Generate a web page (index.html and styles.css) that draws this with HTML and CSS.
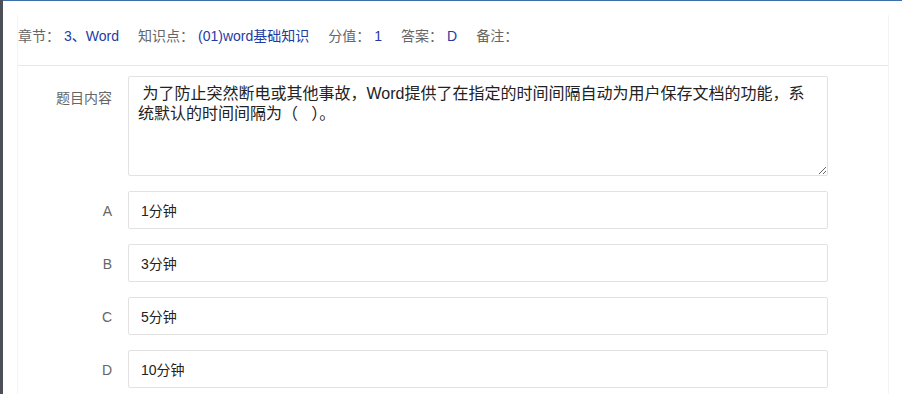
FILE: index.html
```html
<!DOCTYPE html>
<html lang="zh-CN">
<head>
    <meta charset="UTF-8">
    <meta name="viewport" content="width=device-width, initial-scale=1.0">
    <title>题目详情</title>
    <link rel="stylesheet" href="styles.css">
</head>
<body>

    <div class="side-strip"></div>

    <div class="main">
        <div class="card">
            <div class="info-bar">
                <span class="info-item"><span class="info-label">章节：</span><span class="info-value">3、Word</span></span>
                <span class="info-item"><span class="info-label">知识点：</span><span class="info-value">(01)word基础知识</span></span>
                <span class="info-item"><span class="info-label">分值：</span><span class="info-value">1</span></span>
                <span class="info-item"><span class="info-label">答案：</span><span class="info-value">D</span></span>
                <span class="info-item"><span class="info-label">备注：</span><span class="info-value"></span></span>
            </div>

            <form class="question-form">
                <div class="form-row">
                    <label class="form-label content-label">题目内容</label>
                    <textarea class="question-text"> 为了防止突然断电或其他事故，Word提供了在指定的时间间隔自动为用户保存文档的功能，系统默认的时间间隔为（   ）。</textarea>
                </div>
                <div class="form-row">
                    <label class="form-label">A</label>
                    <input type="text" class="option-input" value="1分钟">
                </div>
                <div class="form-row">
                    <label class="form-label">B</label>
                    <input type="text" class="option-input" value="3分钟">
                </div>
                <div class="form-row">
                    <label class="form-label">C</label>
                    <input type="text" class="option-input" value="5分钟">
                </div>
                <div class="form-row">
                    <label class="form-label">D</label>
                    <input type="text" class="option-input" value="10分钟">
                </div>
            </form>
        </div>
    </div>

</body>
</html>
```

FILE: styles.css
```css
body {
    margin: 0;
    padding: 0;
    height: 394px;
    overflow: hidden;
    display: flex;
    background: #fff;
    font-family: "Liberation Sans", "Noto Sans CJK SC", sans-serif;
    font-size: 14px;
    color: #333;
}

.side-strip {
    width: 3px;
    flex-shrink: 0;
    background: #4c4f57;
}

.main {
    flex: 1;
    border-top: 1px solid #3d6fa8;
    padding: 14px 0 0 15px;
}

.card {
    width: 870px;
    height: 400px;
    border-left: 1px solid #f4f4f4;
    border-right: 1px solid #f4f4f4;
    margin-left: -1px;
}

/* Header info */
.info-bar {
    display: flex;
    gap: 19px;
    height: 51px;
    padding-top: 10px;
    box-sizing: border-box;
    line-height: 22px;
    border-bottom: 1px solid #e8e8e8;
    white-space: nowrap;
}

.info-label {
    color: #666;
}

.info-value {
    color: #1e3ca3;
    margin-left: 4px;
}

/* Form */
.question-form {
    padding-top: 10px;
}

.form-row {
    display: flex;
    align-items: flex-start;
    margin-bottom: 15px;
}

.form-label {
    width: 110px;
    height: 38px;
    box-sizing: border-box;
    padding: 2px 16px 0 0;
    text-align: right;
    color: #666;
    line-height: 36px;
    flex-shrink: 0;
}

.content-label {
    padding-top: 4px;
}

.question-text {
    width: 700px;
    height: 100px;
    box-sizing: border-box;
    border: 1px solid #e2e2e2;
    border-radius: 2px;
    padding: 7px 9px;
    font-family: "Liberation Sans", "Noto Sans CJK SC", sans-serif;
    font-size: 16px;
    line-height: 20px;
    color: #222;
    outline: none;
}

.option-input {
    width: 700px;
    height: 38px;
    box-sizing: border-box;
    border: 1px solid #e2e2e2;
    border-radius: 2px;
    padding: 0 12px;
    font-family: "Liberation Sans", "Noto Sans CJK SC", sans-serif;
    font-size: 14px;
    color: #222;
    outline: none;
}
```
